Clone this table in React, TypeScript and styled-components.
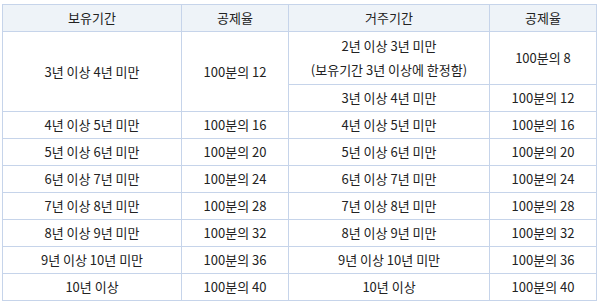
import React from "react";
import styled, { createGlobalStyle } from "styled-components";

const Global = createGlobalStyle`
  html, body { margin: 0; padding: 0; background: #ffffff; }
  body { font-family: "Noto Sans CJK KR", "Noto Sans", sans-serif; }
`;

const Wrap = styled.div`
  padding: 4px 0 0 2px;
`;

const Grid = styled.div`
  display: grid;
  grid-template-columns: 179px 107px 201px 107px;
  grid-template-rows: 27px 53px repeat(8, 27px);
  width: 594px;
  border-top: 1px solid #c6d4ea;
  border-left: 1px solid #c6d4ea;
  color: #222222;
  font-size: 13px;
  line-height: 24px;
`;

const Cell = styled.div<{ $head?: boolean; $span?: number }>`
  display: flex;
  flex-direction: column;
  align-items: center;
  justify-content: center;
  text-align: center;
  border-right: 1px solid #c6d4ea;
  border-bottom: 1px solid #c6d4ea;
  background: ${(p) => (p.$head ? "#eef3f8" : "#ffffff")};
  ${(p) => (p.$span ? `grid-row: span ${p.$span};` : "")}
  white-space: nowrap;
`;

const rows: [string, string, string, string][] = [
  ["4년 이상 5년 미만", "100분의 16", "4년 이상 5년 미만", "100분의 16"],
  ["5년 이상 6년 미만", "100분의 20", "5년 이상 6년 미만", "100분의 20"],
  ["6년 이상 7년 미만", "100분의 24", "6년 이상 7년 미만", "100분의 24"],
  ["7년 이상 8년 미만", "100분의 28", "7년 이상 8년 미만", "100분의 28"],
  ["8년 이상 9년 미만", "100분의 32", "8년 이상 9년 미만", "100분의 32"],
  ["9년 이상 10년 미만", "100분의 36", "9년 이상 10년 미만", "100분의 36"],
  ["10년 이상", "100분의 40", "10년 이상", "100분의 40"],
];

export default function App() {
  return (
    <>
      <Global />
      <Wrap>
        <Grid>
          <Cell $head>보유기간</Cell>
          <Cell $head>공제율</Cell>
          <Cell $head>거주기간</Cell>
          <Cell $head>공제율</Cell>

          <Cell $span={2}>3년 이상 4년 미만</Cell>
          <Cell $span={2}>100분의 12</Cell>
          <Cell>
            <span>2년 이상 3년 미만</span>
            <span>(보유기간 3년 이상에 한정함)</span>
          </Cell>
          <Cell>100분의 8</Cell>
          <Cell>3년 이상 4년 미만</Cell>
          <Cell>100분의 12</Cell>

          {rows.map((r, i) => (
            <React.Fragment key={i}>
              {r.map((t, j) => (
                <Cell key={j}>{t}</Cell>
              ))}
            </React.Fragment>
          ))}
        </Grid>
      </Wrap>
    </>
  );
}
